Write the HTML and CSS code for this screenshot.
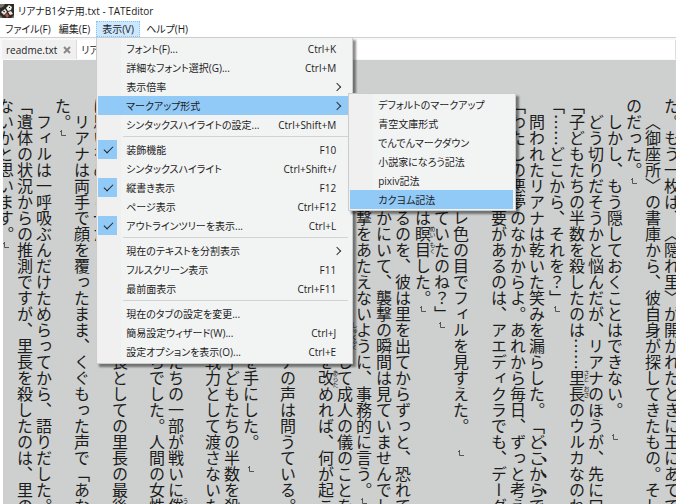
FILE: index.html
```html
<!DOCTYPE html>
<html lang="ja">
<head>
    <meta charset="UTF-8">
    <meta name="viewport" content="width=device-width, initial-scale=1.0">
    <title>リアナB1タテ用.txt - TATEditor</title>
    <link rel="stylesheet" href="styles.css">
</head>
<body>
    <svg width="0" height="0" class="defs" aria-hidden="true">
        <symbol id="eol" viewBox="0 0 6 6"><path d="M0 1.5h1.5M1.5 0v5.5H6" fill="none" stroke="#555"/></symbol>
    </svg>

    <header class="titlebar">
        <svg class="app-icon" viewBox="0 0 14 14" aria-hidden="true">
            <rect width="14" height="14" fill="#2c2a26"/>
            <path d="M0 0h5L3 3 0 4zM0 11l3 3H0zM11 14l3-3v3z" fill="#77766a"/>
            <path d="M6 4L9 1l3 2-1 3-3 1z" fill="#f4f1ea"/>
            <path d="M1 8l4-3 2 3-3 3zM8 8l3-1 2 3-3 1z" fill="#e9e5dc"/>
            <path d="M9 3l1 1M3 7l2 1" stroke="#222" stroke-width="1"/>
            <path d="M5 11l2-2 2 3-2 2z" fill="#b9553f"/>
        </svg>
        <h1>リアナB1タテ用.txt - TATEditor</h1>
    </header>

    <nav class="menubar">
        <button type="button">ファイル(F)</button>
        <button type="button">編集(E)</button>
        <div class="menu-root">
            <button type="button" class="open" aria-expanded="true">表示(V)</button>
            <ul class="menu view-menu">
                <li><button type="button">フォント(F)...<kbd>Ctrl+K</kbd></button></li>
                <li><button type="button">詳細なフォント選択(G)...<kbd>Ctrl+M</kbd></button></li>
                <li><button type="button" class="has-sub">表示倍率</button></li>
                <li>
                    <button type="button" class="has-sub active">マークアップ形式</button>
                    <ul class="menu submenu">
                        <li><button type="button">デフォルトのマークアップ</button></li>
                        <li><button type="button">青空文庫形式</button></li>
                        <li><button type="button">でんでんマークダウン</button></li>
                        <li><button type="button">小説家になろう記法</button></li>
                        <li><button type="button">pixiv記法</button></li>
                        <li><button type="button" class="active">カクヨム記法</button></li>
                    </ul>
                </li>
                <li><button type="button">シンタックスハイライトの設定...<kbd>Ctrl+Shift+M</kbd></button></li>
                <li class="separator"></li>
                <li><button type="button" class="checked">装飾機能<kbd>F10</kbd></button></li>
                <li><button type="button">シンタックスハイライト<kbd>Ctrl+Shift+/</kbd></button></li>
                <li><button type="button" class="checked">縦書き表示<kbd>F12</kbd></button></li>
                <li><button type="button">ページ表示<kbd>Ctrl+F12</kbd></button></li>
                <li><button type="button" class="checked">アウトラインツリーを表示...<kbd>Ctrl+L</kbd></button></li>
                <li class="separator"></li>
                <li><button type="button" class="has-sub">現在のテキストを分割表示</button></li>
                <li><button type="button">フルスクリーン表示<kbd>F11</kbd></button></li>
                <li><button type="button">最前面表示<kbd>Ctrl+F11</kbd></button></li>
                <li class="separator"></li>
                <li><button type="button">現在のタブの設定を変更...</button></li>
                <li><button type="button">簡易設定ウィザード(W)...<kbd>Ctrl+J</kbd></button></li>
                <li><button type="button">設定オプションを表示(O)...<kbd>Ctrl+E</kbd></button></li>
            </ul>
        </div>
        <button type="button">ヘルプ(H)</button>
    </nav>

    <div class="tabs">
        <button type="button" class="tab">readme.txt
            <svg class="close" viewBox="0 0 8 8" aria-hidden="true"><path d="M1 1l6 6M7 1L1 7"/></svg>
        </button>
        <button type="button" class="tab current">リアナB1タテ用.txt</button>
    </div>

    <main class="page">
        <p>た。もう一枚は、〈隠れ里〉が開かれたときに王にあてて</p>
        <p>　〈御座所〉の書庫から、彼自身が探してきたもの。そし</p>
        <p>のだった。<svg class="eol"><use href="#eol"/></svg></p>
        <p>　しかし、もう隠しておくことはできない。　<svg class="eol"><use href="#eol"/></svg></p>
        <p>　どう切りだそうかと悩んだが、リアナのほうが、先に口</p>
        <p class="loose">「子どもたちの半数を殺したのは……<ruby>里<rt>さと</rt></ruby><ruby>長<rt>おさ</rt></ruby>のウルカなのね</p>
        <p class="loose">「……どこから、それを？」<svg class="eol"><use href="#eol"/></svg></p>
        <p>　問われたリアナは乾いた笑みを漏らした。「<ruby>ど<rt class="dot">﹅</rt></ruby><ruby>こ<rt class="dot">﹅</rt></ruby><ruby>か<rt class="dot">﹅</rt></ruby><ruby>ら<rt class="dot">﹅</rt></ruby>で</p>
        <p>「わたしの悪夢のなかからよ。あれから毎日、ずっと考え</p>
        <p>　なにより、必要があるのは、アエディクラでも、デーグ</p>
        <p></p>
        <p>　リアナはスミレ色の目でフィルを見すえた。　<svg class="eol"><use href="#eol"/></svg></p>
        <p>「やはり気づいていたのね？」<svg class="eol"><use href="#eol"/></svg></p>
        <p class="loose">　その答えに彼は<ruby>瞑<rt>めい</rt></ruby><ruby>目<rt>もく</rt></ruby>した。<svg class="eol"><use href="#eol"/></svg></p>
        <p>　いつか問われるのを、彼は里を出てからずっと、恐れて</p>
        <p class="loose">「ぼくは森のなかにいて、襲撃の瞬間は見ていませんでし</p>
        <p>　できるだけ衝撃をあたえないように、事務的に言う。<svg class="eol"><use href="#eol"/></svg></p>
        <p>　彼女はかつて里の者たちから<ruby>祝<rt>しゅく</rt></ruby><ruby>福<rt>ふく</rt></ruby>して成人の儀のことを</p>
        <p>「それでもあなたがたが里の掟などを<ruby>改<rt>あらた</rt></ruby>めれば、何が起こ</p>
        <p></p>
        <p>　なにもかも見とおそうとするリアナの声は問うている。</p>
        <p class="tight"></p>
        <p>　やがて彼はかたわらの白いカップを手にした。　<svg class="eol"><use href="#eol"/></svg></p>
        <p>「それでは、あの日に彼らは里から子どもたちの半数を殺</p>
        <p>　里の子どもたちを外の者に、ただ戦力として渡さないた</p>
        <p class="tight"></p>
        <p>　あのころから、里に暮らすおとなたちの一部が戦いに<ruby>倦<rt>う</rt></ruby></p>
        <p>い、やがて争いをやめてしまったからでした。人間の女性</p>
        <p class="tight"></p>
        <p>　それがあの人の、里をまもる者の長としての里長の最後</p>
        <p>は思いをめぐらせた。　<svg class="eol"><use href="#eol"/></svg></p>
        <p>　リアナは両手で顔を覆ったまま、くぐもった声で「あな</p>
        <p>た。<svg class="eol"><use href="#eol"/></svg></p>
        <p>　フィルは一呼吸ぶんだけためらってから、語りだした。</p>
        <p>「遺体の状況からの推測ですが、里長を殺したのは、里の</p>
        <p>ないかと思います。<svg class="eol"><use href="#eol"/></svg></p>
    </main>
</body>
</html>
```
FILE: styles.css
```css
:root {
    --highlight: #91c9f7;
    --menu-bg: #f2f3f3;
    --gutter: #f0f0f0;
    --page: #cdd0cf;
    --ink: #1c1c1c;
}

* {
    margin: 0;
    padding: 0;
    box-sizing: border-box;
}

body {
    display: flex;
    flex-direction: column;
    height: 100vh;
    overflow: hidden;
    background: #fff;
    color: var(--ink);
    font-family: "Open Sans", "Noto Sans CJK JP", sans-serif;
    font-size: 10px;
    font-feature-settings: "palt";
}

button {
    border: none;
    background: none;
    color: inherit;
    font: inherit;
    font-feature-settings: inherit;
    white-space: nowrap;
}

ul {
    list-style: none;
}

.defs {
    position: absolute;
}

/* title and menu bar */
.titlebar {
    display: flex;
    align-items: center;
    gap: 4px;
    height: 21px;
    flex: none;
}

.titlebar h1 {
    font-size: 10px;
    font-weight: normal;
}

.app-icon {
    width: 14px;
    height: 14px;
}

.menubar {
    display: flex;
    height: 17px;
    flex: none;
    border-bottom: 1px solid #d0d0d0;
}

.menubar > button,
.menu-root > button {
    height: 16px;
    padding: 0 3px;
    line-height: 14px;
    border: 1px solid transparent;
}

.menubar > button:first-child {
    padding-left: 4px;
}

.menu-root {
    position: relative;
    margin: 0 2px;
}

.menu-root > .open {
    padding: 0 5px;
    background: #cce8ff;
    border: 1px dotted #86c5f5;
}

/* drop-down menus */
.menu {
    position: absolute;
    z-index: 10;
    padding: 1px;
    background: linear-gradient(to right, var(--gutter) 24px, var(--menu-bg) 24px);
    border: 1px solid #ccc;
    box-shadow: 3px 3px 2px rgba(0, 0, 0, 0.45);
}

.view-menu {
    top: 100%;
    left: 0;
    width: 257px;
    padding-bottom: 2px;
}

.menu li {
    position: relative;
    padding-right: 3px;
}

.menu li button {
    display: flex;
    align-items: center;
    width: 100%;
    height: 19px;
    padding: 0 12px 0 28px;
    text-align: left;
    position: relative;
}

.menu kbd {
    margin-left: auto;
    font-family: inherit;
    font-size: 10px;
}

.menu .active {
    background: var(--highlight);
}

.menu .separator {
    height: 6px;
    margin-left: 25px;
    padding-top: 2px;
}

.menu .separator::before {
    content: "";
    display: block;
    height: 1px;
    background: #d2d2d2;
}

.menu .checked::before {
    content: "";
    position: absolute;
    left: 0;
    top: 0;
    width: 19px;
    height: 19px;
    background: var(--highlight);
}

.menu .checked::after {
    content: "";
    position: absolute;
    left: 6px;
    top: 6px;
    width: 8px;
    height: 4px;
    border-left: 1px solid #222;
    border-bottom: 1px solid #222;
    transform: rotate(-45deg);
}

.menu .has-sub::after {
    content: "";
    width: 5px;
    height: 5px;
    margin-left: auto;
    margin-right: -4px;
    border-top: 1px solid #333;
    border-right: 1px solid #333;
    transform: rotate(45deg);
}

.submenu {
    top: -3px;
    left: 100%;
    width: 168px;
    margin-left: -3px;
}

.submenu li {
    padding-right: 1px;
}

/* document tabs */
.tabs {
    display: flex;
    height: 22px;
    flex: none;
    padding: 2px 0 1px 2px;
    background: #f8f8f8;
}

.tab {
    display: flex;
    align-items: center;
    gap: 6px;
    padding: 0 5px 0 4px;
    background: #f0f0f0;
    border-right: 1px solid #ddd;
}

.tab.current {
    flex: 1;
    background: #fff;
}

.close {
    width: 8px;
    height: 8px;
    fill: none;
    stroke: #8a8a8a;
    stroke-width: 2;
}

/* vertical text, one column per line, first line at the right */
.page {
    flex: 1;
    display: flex;
    flex-direction: row-reverse;
    min-height: 0;
    margin-left: 3px;
    padding-top: 38px;
    overflow: hidden;
    background: var(--page);
    font-family: "Noto Sans CJK JP", sans-serif;
    font-size: 16px;
    font-feature-settings: normal;
}

.page p {
    flex: none;
    width: 19px;
    line-height: 19px;
    writing-mode: vertical-rl;
    white-space: nowrap;
    text-spacing-trim: space-all;
}

.page p:first-child {
    margin-right: -5px;
}

.page .loose {
    width: 20px;
}

.page .tight {
    width: 18px;
}

.page ruby {
    display: inline-block;
    position: relative;
}

.page rt {
    display: block;
    position: absolute;
    top: 0;
    left: 16px;
    font-size: 6px;
    line-height: 6px;
}

.page rt.dot {
    top: 4px;
    left: 13px;
    font-size: 9px;
}

/* line end mark */
.eol {
    width: 6px;
    height: 6px;
}
```
